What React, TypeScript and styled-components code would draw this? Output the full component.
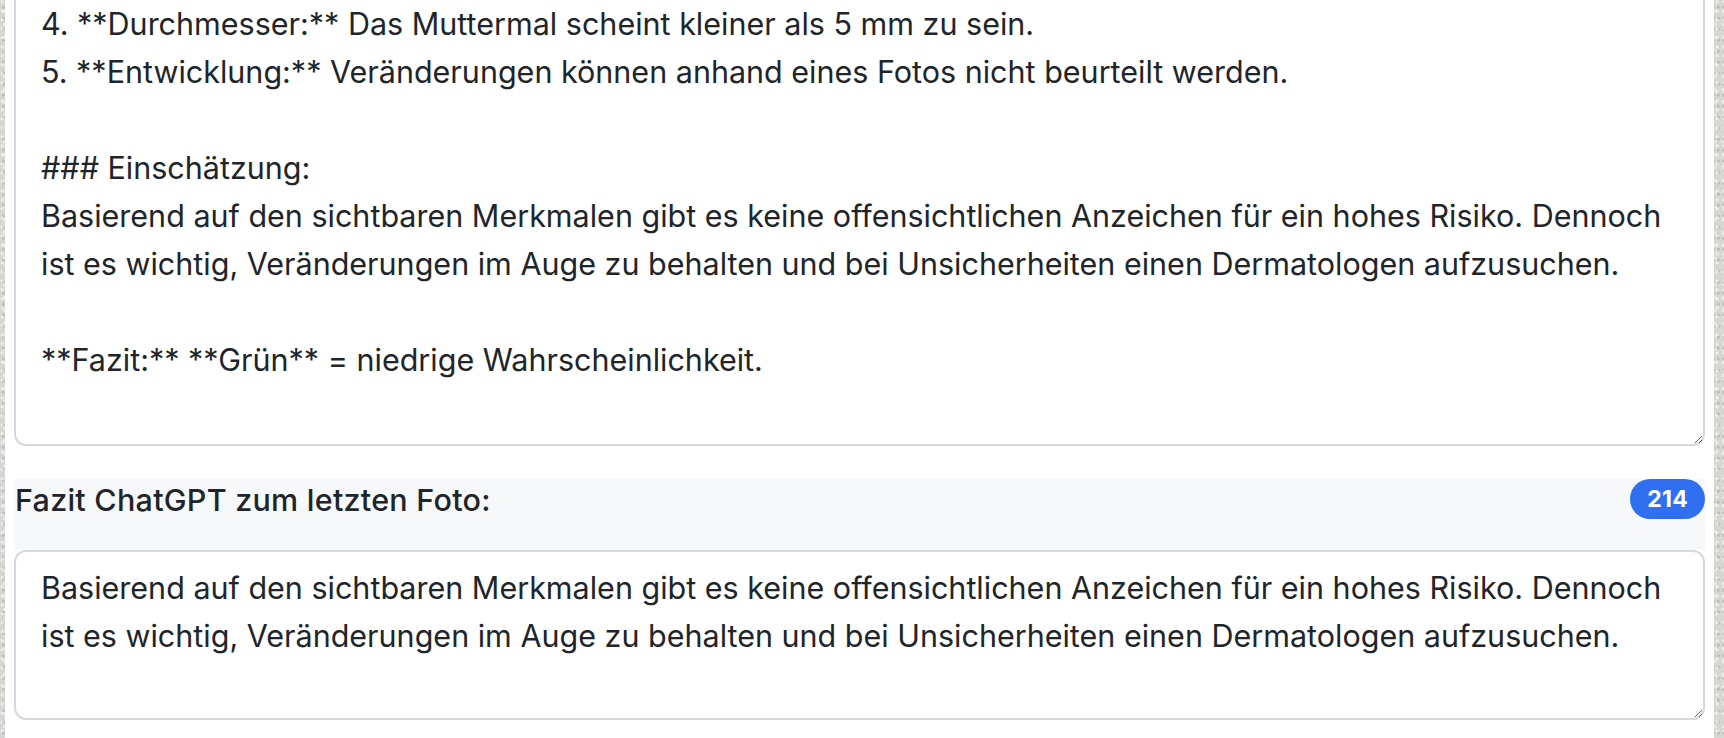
import React from 'react';
import styled, { createGlobalStyle } from 'styled-components';

const GlobalStyles = createGlobalStyle`
    html, body {
        margin: 0;
        padding: 0;
    }

    body {
        font-family: Inter, 'Noto Sans', 'Liberation Sans', sans-serif;
        color: #212529;
        background-color: #d6d6d2;
        background-image:
            radial-gradient(circle at 30% 20%, rgba(255, 255, 255, 0.55) 0 1px, transparent 2px),
            radial-gradient(circle at 70% 65%, rgba(160, 160, 155, 0.45) 0 1px, transparent 2px),
            radial-gradient(circle at 50% 90%, rgba(245, 245, 240, 0.6) 0 1.5px, transparent 2.5px);
        background-size: 7px 9px, 5px 11px, 9px 13px;
        overflow: hidden;
    }
`;

const Card = styled.div`
    margin: -14px 0 0 5px;
    width: 1709px;
    padding: 0 9px 40px;
    box-sizing: border-box;
    background: #fff;
    display: flex;
    flex-direction: column;
`;

const AnalysisField = styled.textarea<{ $height: number }>`
    display: block;
    width: 100%;
    height: ${(p) => p.$height}px;
    box-sizing: border-box;
    margin: 0;
    padding: 12px 25px;
    border: 2px solid #d5d9de;
    border-radius: 12px;
    background: #fff;
    color: #212529;
    font-family: Inter, 'Noto Sans', 'Liberation Sans', sans-serif;
    font-size: 30.5px;
    line-height: 48px;
    resize: vertical;
    outline: none;
`;

const Section = styled.section`
    margin-top: 33px;
    display: flex;
    flex-direction: column;
`;

const SectionHeader = styled.div`
    display: flex;
    align-items: center;
    justify-content: space-between;
    height: 40px;
    padding-bottom: 31px;
    background: #f7f8fa;
`;

const Label = styled.label`
    padding-left: 1px;
    font-size: 30.5px;
    font-weight: 500;
    letter-spacing: 0.25px;
    color: #212529;
`;

const Badge = styled.span`
    display: inline-flex;
    align-items: center;
    justify-content: center;
    height: 40px;
    padding: 0 17px;
    box-sizing: border-box;
    border-radius: 20px;
    background: #3070f0;
    color: #fff;
    font-size: 23px;
    font-weight: 700;
    letter-spacing: 0.3px;
`;

const analysis = `4. **Durchmesser:** Das Muttermal scheint kleiner als 5 mm zu sein.
5. **Entwicklung:** Veränderungen können anhand eines Fotos nicht beurteilt werden.

### Einschätzung:
Basierend auf den sichtbaren Merkmalen gibt es keine offensichtlichen Anzeichen für ein hohes Risiko. Dennoch ist es wichtig, Veränderungen im Auge zu behalten und bei Unsicherheiten einen Dermatologen aufzusuchen.

**Fazit:** **Grün** = niedrige Wahrscheinlichkeit.`;

const conclusion =
    'Basierend auf den sichtbaren Merkmalen gibt es keine offensichtlichen Anzeichen für ein hohes Risiko. Dennoch ist es wichtig, Veränderungen im Auge zu behalten und bei Unsicherheiten einen Dermatologen aufzusuchen.';

function App() {
    return (
        <>
            <GlobalStyles />
            <Card>
                <AnalysisField $height={460} defaultValue={analysis} />
                <Section>
                    <SectionHeader>
                        <Label htmlFor="fazit">Fazit ChatGPT zum letzten Foto:</Label>
                        <Badge>214</Badge>
                    </SectionHeader>
                    <AnalysisField id="fazit" $height={170} defaultValue={conclusion} />
                </Section>
            </Card>
        </>
    );
}

export default App;
